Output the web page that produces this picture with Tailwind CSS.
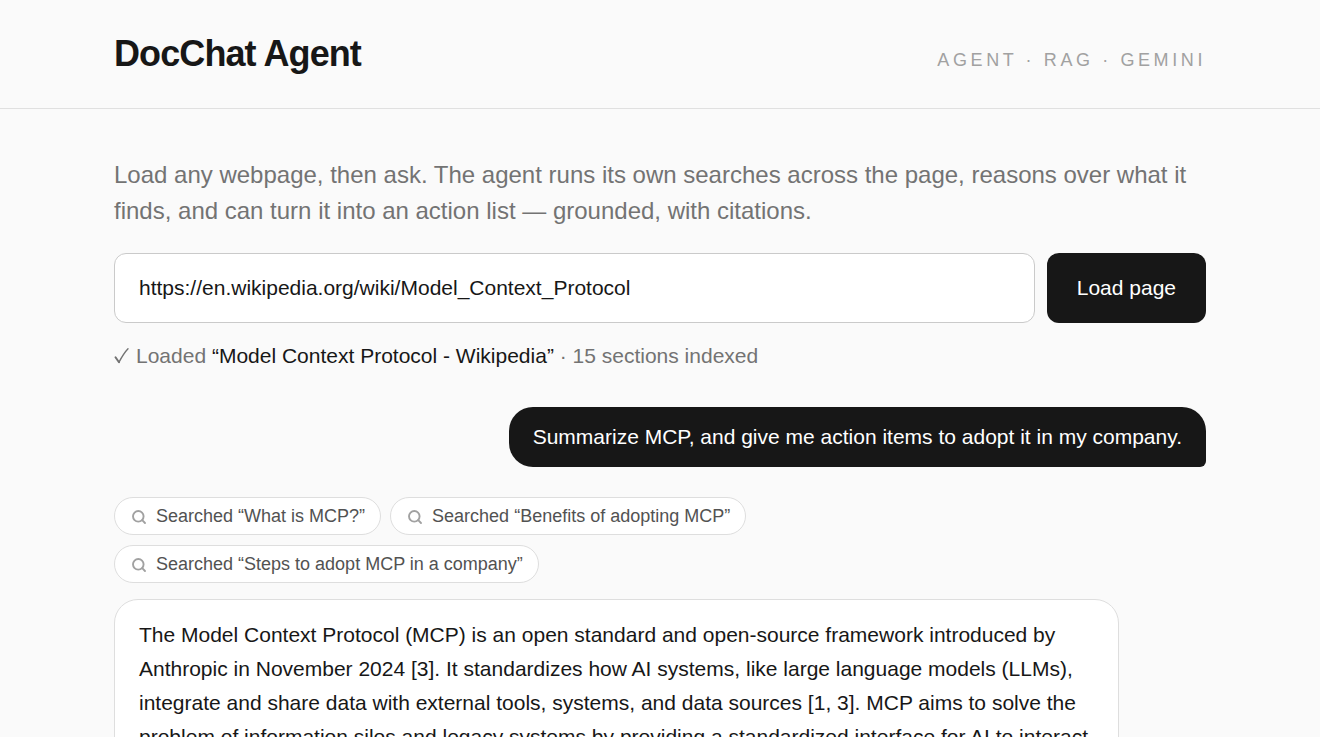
<!DOCTYPE html>
<html lang="en">
<head>
<meta charset="utf-8">
<meta name="viewport" content="width=device-width, initial-scale=1">
<title>DocChat Agent</title>
<script src="https://cdn.jsdelivr.net/npm/@tailwindcss/browser@4"></script>
</head>
<body class="h-screen overflow-hidden bg-[#fafafa] font-['Liberation_Sans',Arial,sans-serif] text-[21px] text-neutral-900">
<header class="border-b border-[#e0e0e0]">
  <div class="mx-auto flex max-w-[1140px] items-baseline justify-between px-6 py-8">
    <h1 class="text-[36px] leading-11 font-bold tracking-tight">DocChat Agent</h1>
    <p class="text-[18px] leading-6 tracking-[0.2em] text-[#a1a1a1]">AGENT · RAG · GEMINI</p>
  </div>
</header>
<main class="mx-auto max-w-[1140px] px-6 pt-12">
  <p class="text-2xl leading-9 text-[#737373]">Load any webpage, then ask. The agent runs its own searches across the page, reasons over what it finds, and can turn it into an action list — grounded, with citations.</p>
  <form class="mt-6 flex gap-3">
    <input type="url" aria-label="Page URL" value="https://en.wikipedia.org/wiki/Model_Context_Protocol" class="h-[70px] min-w-0 flex-1 rounded-xl border border-[#cacaca] bg-white px-6 outline-none">
    <button type="button" class="h-[70px] rounded-xl bg-neutral-900 px-[30px] text-white">Load page</button>
  </form>
  <p class="mt-[17px] flex items-center gap-1.5 leading-8 text-[#737373]">
    <svg class="h-[18px] w-4 shrink-0" viewBox="0 0 16 18" fill="none" stroke="currentColor" stroke-linecap="round" stroke-linejoin="round" aria-label="Done"><path d="M1.5 10.2 5 15.2" stroke-width="2"/><path d="M5 15.2C7.5 10.5 10 6 14 1.8" stroke-width="1.4"/></svg>
    <span>Loaded <span class="text-neutral-900">“Model Context Protocol - Wikipedia”</span> · 15 sections indexed</span>
  </p>
  <div class="mt-[35px] flex justify-end">
    <p class="rounded-3xl rounded-br-md bg-neutral-900 px-6 py-[13px] leading-[34px] text-white">Summarize MCP, and give me action items to adopt it in my company.</p>
  </div>
  <section class="mt-[30px] max-w-[92%]">
    <ul class="flex max-w-[800px] flex-wrap gap-x-[9px] gap-y-[10px] text-[18px] leading-6 text-[#525252]">
      <li class="flex items-center gap-[9px] rounded-full border border-[#dedede] bg-white py-1.5 pr-[15px] pl-4">
        <svg class="mt-0.5 size-4 text-[#a1a1a1]" viewBox="0 0 16 16" fill="none" stroke="currentColor" stroke-width="1.9" stroke-linecap="round" aria-hidden="true"><circle cx="7.3" cy="7.3" r="5.3"/><path d="m11.2 11.2 2.8 2.8"/></svg>
        Searched “What is MCP?”
      </li>
      <li class="flex items-center gap-[9px] rounded-full border border-[#dedede] bg-white py-1.5 pr-[15px] pl-4">
        <svg class="mt-0.5 size-4 text-[#a1a1a1]" viewBox="0 0 16 16" fill="none" stroke="currentColor" stroke-width="1.9" stroke-linecap="round" aria-hidden="true"><circle cx="7.3" cy="7.3" r="5.3"/><path d="m11.2 11.2 2.8 2.8"/></svg>
        Searched “Benefits of adopting MCP”
      </li>
      <li class="flex items-center gap-[9px] rounded-full border border-[#dedede] bg-white py-1.5 pr-[15px] pl-4">
        <svg class="mt-0.5 size-4 text-[#a1a1a1]" viewBox="0 0 16 16" fill="none" stroke="currentColor" stroke-width="1.9" stroke-linecap="round" aria-hidden="true"><circle cx="7.3" cy="7.3" r="5.3"/><path d="m11.2 11.2 2.8 2.8"/></svg>
        Searched “Steps to adopt MCP in a company”
      </li>
    </ul>
    <p class="mt-4 rounded-3xl border border-[#dedede] bg-white px-6 py-[18px] leading-[34px]">The Model Context Protocol (MCP) is an open standard and open-source framework introduced by Anthropic in November 2024 [3]. It standardizes how AI systems, like large language models (LLMs), integrate and share data with external tools, systems, and data sources [1, 3]. MCP aims to solve the problem of information silos and legacy systems by providing a standardized interface for AI to interact</p>
  </section>
</main>
</body>
</html>
